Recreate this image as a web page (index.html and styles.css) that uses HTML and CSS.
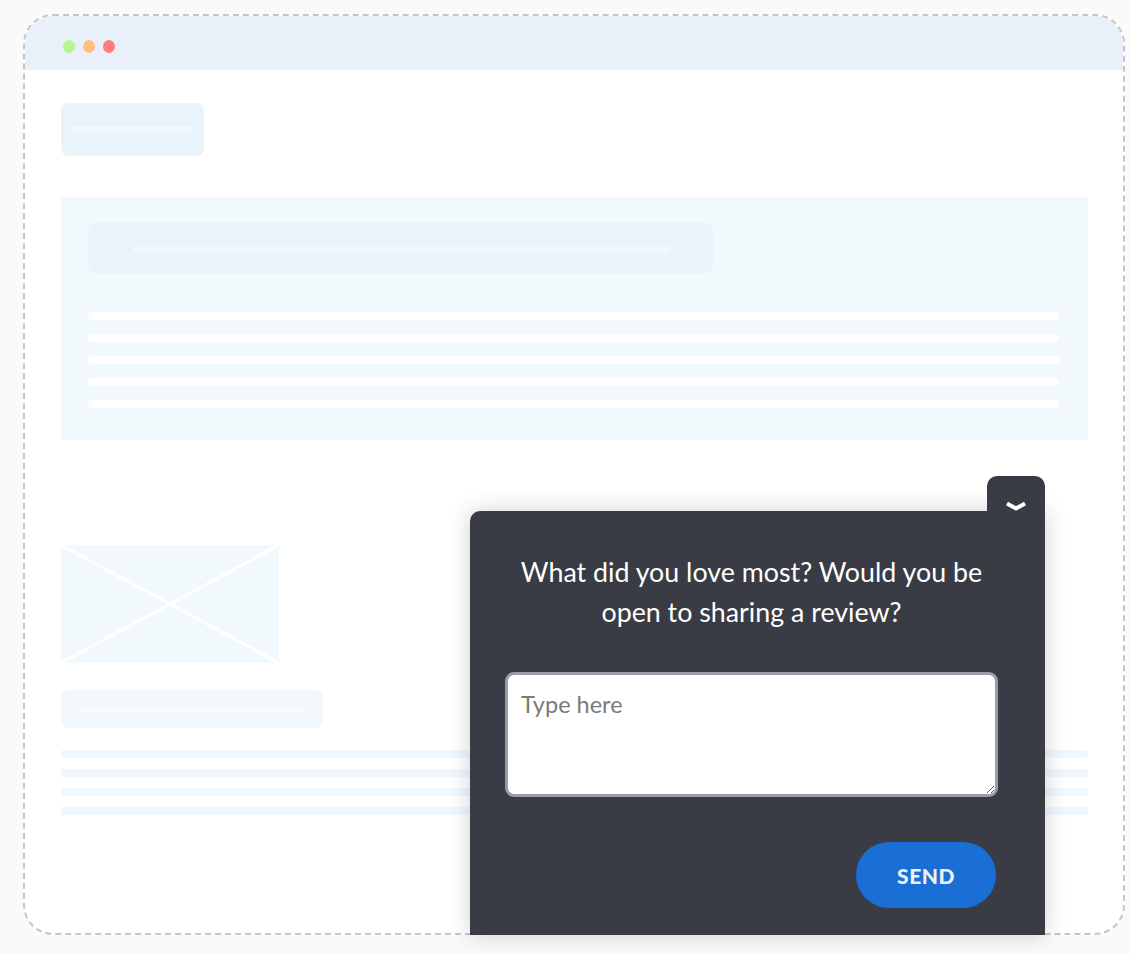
FILE: index.html
```html
<!DOCTYPE html>
<html>
<head>
<meta charset="utf-8">
<link rel="stylesheet" href="styles.css">
</head>
<body>
<div class="browser">
  <div class="topbar">
    <span class="dot dot-green"></span>
    <span class="dot dot-orange"></span>
    <span class="dot dot-red"></span>
  </div>
  <div class="page">
    <div class="sk-btn"><div class="sk-btn-line"></div></div>
    <div class="panel">
      <div class="panel-head"><div class="panel-head-line"></div></div>
      <div class="panel-lines">
        <div class="pl"></div><div class="pl"></div><div class="pl"></div><div class="pl"></div><div class="pl"></div>
      </div>
    </div>
    <div class="media">
      <svg class="media-x" viewBox="0 0 218 118" preserveAspectRatio="none">
        <line x1="0" y1="0" x2="218" y2="118" stroke="#ffffff" stroke-width="3"/>
        <line x1="218" y1="0" x2="0" y2="118" stroke="#ffffff" stroke-width="3"/>
      </svg>
    </div>
    <div class="sk-btn2"><div class="sk-btn2-line"></div></div>
    <div class="lines2">
      <div class="l2"></div><div class="l2"></div><div class="l2"></div><div class="l2"></div>
    </div>
  </div>

  <div class="widget">
    <div class="tab">
      <svg width="22" height="12" viewBox="0 0 22 12"><polyline points="2,2.5 11,7.5 20,2.5" fill="none" stroke="#ffffff" stroke-width="4" stroke-linejoin="miter"/></svg>
    </div>
    <div class="widget-body">
      <p class="question">What did you love most? Would you be open to sharing a review?</p>
      <textarea class="answer" placeholder="Type here"></textarea>
      <div class="actions"><button class="send">SEND</button></div>
    </div>
  </div>
</div>
</body>
</html>
```
FILE: styles.css
```css
html, body { margin: 0; padding: 0; }
body {
  background: #fafafa;
  width: 1130px;
  height: 954px;
  overflow: hidden;
  font-family: "Lato", "Open Sans", sans-serif;
}
.browser {
  position: relative;
  margin: 14px 0 0 23px;
  width: 1102px;
  height: 921px;
  box-sizing: border-box;
  border: 2px dashed #c6c6c6;
  border-radius: 30px;
  background: #ffffff;
}
.topbar {
  height: 54px;
  background: #e9f0fa;
  border-radius: 28px 28px 0 0;
  display: flex;
  align-items: center;
  gap: 8px;
  padding-left: 38px;
  padding-top: 6px;
  box-sizing: border-box;
}
.dot { width: 12px; height: 13px; border-radius: 50%; display: block; }
.dot-green { background: #b6f68c; }
.dot-orange { background: #ffc07c; }
.dot-red { background: #ff7c7b; }

.page {
  padding: 33px 35px 0 36px;
  display: flex;
  flex-direction: column;
}
.sk-btn {
  width: 143px;
  height: 53px;
  border-radius: 8px;
  background: #e9f3fa;
  display: flex;
  align-items: center;
  justify-content: center;
}
.sk-btn-line { width: 123px; height: 7px; border-radius: 4px; background: #eef8fe; }

.panel {
  margin-top: 41px;
  height: 243px;
  background: #f2f9fd;
  border-radius: 4px;
  padding: 25px 29px 0 27px;
  box-sizing: border-box;
}
.panel-head {
  width: 625px;
  height: 52px;
  border-radius: 10px;
  background: #ebf3fa;
  display: flex;
  align-items: center;
  padding-left: 45px;
  box-sizing: border-box;
}
.panel-head-line { width: 537px; height: 8px; border-radius: 4px; background: #eff8fe; margin-top: 1px; }
.panel-lines {
  margin-top: 38px;
  display: flex;
  flex-direction: column;
  gap: 14px;
}
.pl { height: 8px; border-radius: 4px; background: #ffffff; }

.media {
  margin-top: 105px;
  width: 218px;
  height: 118px;
  background: #f2f9fd;
}
.media-x { width: 100%; height: 100%; display: block; }

.sk-btn2 {
  margin-top: 27px;
  width: 262px;
  height: 38px;
  border-radius: 7px;
  background: #f3f8fc;
  display: flex;
  align-items: center;
  padding-left: 19px;
  box-sizing: border-box;
}
.sk-btn2-line { width: 226px; height: 6px; border-radius: 3px; background: #f6fbfe; }

.lines2 {
  margin-top: 22px;
  display: flex;
  flex-direction: column;
  gap: 11px;
}
.l2 { height: 8px; border-radius: 3px; background: #f0f8fe; }

/* feedback widget overlay */
.widget {
  position: absolute;
  left: 445px;
  top: 495px;
  width: 575px;
  height: 424px;
  background: #393c45;
  border-radius: 10px 0 0 0;
  box-shadow: 0 0 22px rgba(40, 44, 60, 0.22);
}
.tab {
  position: absolute;
  right: 0;
  top: -35px;
  width: 58px;
  height: 45px;
  background: #393c45;
  border-radius: 10px 10px 0 0;
  display: flex;
  justify-content: center;
  padding-top: 25px;
  box-sizing: border-box;
}
.tab svg { display: block; }
.widget-body {
  padding: 41px 47px 0 35px;
  display: flex;
  flex-direction: column;
}
.question {
  margin: 0;
  color: #ffffff;
  font-size: 26.8px;
  line-height: 40px;
  text-align: center;
  padding: 0 10px;
}
.answer {
  margin-top: 40px;
  height: 125px;
  width: 100%;
  box-sizing: border-box;
  border: 3px solid #9a9ca6;
  border-radius: 9px;
  background: #ffffff;
  font-family: inherit;
  font-size: 23.5px;
  line-height: 30px;
  padding: 14px 13px;
  color: #333;
  outline: none;
}
.answer::placeholder { color: #7a7a7a; }
.actions {
  margin-top: 45px;
  display: flex;
  justify-content: flex-end;
}
.send {
  width: 140px;
  height: 66px;
  border: none;
  border-radius: 33px;
  background: #1a6fd6;
  color: #eef0f6;
  font-family: inherit;
  font-size: 21px;
  font-weight: 900;
  letter-spacing: 0.5px;
  margin-right: 2px;
  padding-top: 2px;
}
```
